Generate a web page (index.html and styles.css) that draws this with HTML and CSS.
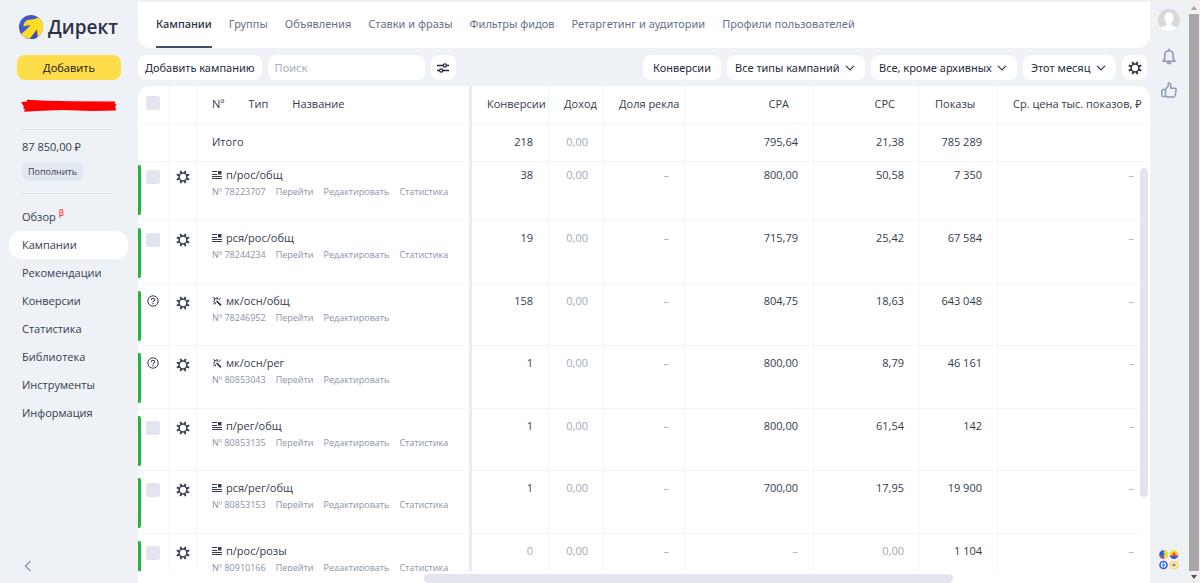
FILE: index.html
```html
<!DOCTYPE html>
<html lang="ru">
<head>
<meta charset="utf-8">
<title>Директ — Кампании</title>
<link rel="stylesheet" href="styles.css">
</head>
<body>
<svg class="defs" aria-hidden="true">
  <symbol id="gear" viewBox="0 0 14 14">
    <circle cx="7" cy="7" r="3.9" fill="none" stroke="currentColor" stroke-width="1.500"/>
    <g stroke="currentColor" stroke-width="1.800">
      <path d="M7 .3v2.500M7 11.200v2.500M.3 7h2.500M11.200 7h2.500" transform="rotate(22.500 7 7)"/>
      <path d="M7 .3v2.500M7 11.200v2.500M.3 7h2.500M11.200 7h2.500" transform="rotate(67.500 7 7)"/>
    </g>
  </symbol>
  <symbol id="textad" viewBox="0 0 10 10">
    <path d="M0 1.500h5M0 4.500h5M0 6.500h10M0 8.500h10" stroke="currentColor" stroke-width="1"/>
    <path d="M6 1h3.500v3.500H6z" fill="currentColor"/>
  </symbol>
  <symbol id="wand" viewBox="0 0 10 10">
    <path d="M4.600 5l4.400 4.400" stroke="#20242f" stroke-width="1.500"/>
    <path d="M1.200 1.600l2 1L5.600 1.600l-.6 2.200M1 5.600l1.800-1L2.400 2.600M1 8.400l2.400-2.400M3.600 8.400V6.800M6.800 4l1.800-2.400" fill="none" stroke="currentColor" stroke-width="1"/>
  </symbol>
  <symbol id="help" viewBox="0 0 12 12">
    <circle cx="6" cy="6" r="5.200" fill="none" stroke="currentColor"/>
    <path d="M4.300 4.900c0-2.300 3.500-2.200 3.500-.2 0 1.200-1.800 1.200-1.800 2.500M6 8v1.200" fill="none" stroke="currentColor" stroke-width="1.100"/>
  </symbol>
  <symbol id="chevron" viewBox="0 0 10 6">
    <path d="M1 .8l4 4 4-4" fill="none" stroke="currentColor" stroke-width="1.200"/>
  </symbol>
</svg>

<div class="app">
  <aside class="sidebar">
    <a class="logo" href="#">
      <svg class="logo-mark" viewBox="0 0 24 24" aria-hidden="true">
        <clipPath id="disc"><circle cx="12" cy="12" r="12"/></clipPath>
        <g clip-path="url(#disc)">
          <path d="M0 0h24v24H0z" fill="#3f57cf"/>
          <path d="M18.500 3l3-1L24 6v18h-5.500l-.5-9.500L10.500 24 1 20.500C4 17 8 14 11.500 10.500 9 9.800 6.500 11 4.500 12 4.500 8 6.500 5.200 10 4.800c3-.3 6-.6 8.500-1.800z" fill="#ffdc1f"/>
          <path d="M11 24l7-9.500.5 9.500z" fill="#3b4bb8"/>
        </g>
      </svg>
      <span>Директ</span>
    </a>
    <button class="add" type="button">Добавить</button>
    <svg class="redacted" viewBox="0 0 96 14" preserveAspectRatio="none" aria-hidden="true">
      <path d="M0 3l6-.5L6 .8l20 1 24 .4 44 .2.300 1.500-1 .5 2 1-1 2 .7 4-24 .5-30-1-25 1-13 .8 1-2.500-2-1 1-1.500z" fill="red"/>
    </svg>
    <div class="account">
      <div class="balance">87 850,00 ₽</div>
      <button class="topup" type="button">Пополнить</button>
    </div>
    <nav class="menu">
      <a href="#">Обзор <sup>β</sup></a>
      <a class="active" href="#">Кампании</a>
      <a href="#">Рекомендации</a>
      <a href="#">Конверсии</a>
      <a href="#">Статистика</a>
      <a href="#">Библиотека</a>
      <a href="#">Инструменты</a>
      <a href="#">Информация</a>
    </nav>
    <button class="collapse" type="button" aria-label="Свернуть меню">
      <svg viewBox="0 0 8 12"><path d="M6.500 1L1.500 6l5 5" fill="none" stroke="currentColor" stroke-width="1.500"/></svg>
    </button>
  </aside>

  <main class="main">
    <nav class="tabs">
      <a class="active" href="#">Кампании</a>
      <a href="#">Группы</a>
      <a href="#">Объявления</a>
      <a href="#">Ставки и фразы</a>
      <a href="#">Фильтры фидов</a>
      <a href="#">Ретаргетинг и аудитории</a>
      <a href="#">Профили пользователей</a>
    </nav>

    <div class="toolbar">
      <button class="pill create" type="button">Добавить кампанию</button>
      <input class="search" type="text" placeholder="Поиск" aria-label="Поиск">
      <button class="pill square" type="button" aria-label="Фильтры">
        <svg class="sliders" viewBox="0 0 12 12"><path d="M0 3.500h6M9.500 3.500H12M0 8.500h2.500M6 8.500h6" stroke="currentColor" stroke-width="1.300"/><circle cx="7.800" cy="3.500" r="1.600" fill="none" stroke="currentColor" stroke-width="1.300"/><circle cx="4.200" cy="8.500" r="1.600" fill="none" stroke="currentColor" stroke-width="1.300"/></svg>
      </button>
      <button class="pill push" type="button">Конверсии</button>
      <div class="picker">
        <select class="pill" aria-label="Тип кампаний"><option>Все типы кампаний</option></select>
        <svg class="chevron"><use href="#chevron"/></svg>
      </div>
      <div class="picker">
        <select class="pill" aria-label="Статус"><option>Все, кроме архивных</option></select>
        <svg class="chevron"><use href="#chevron"/></svg>
      </div>
      <div class="picker">
        <select class="pill" aria-label="Период"><option>Этот месяц</option></select>
        <svg class="chevron"><use href="#chevron"/></svg>
      </div>
      <button class="pill square" type="button" aria-label="Настройки таблицы"><svg class="gear"><use href="#gear"/></svg></button>
    </div>

    <section class="panel">
      <div class="viewport">
        <table class="grid">
          <colgroup>
            <col class="c-check"><col class="c-gear"><col class="c-name"><col class="c-conv"><col class="c-income"><col class="c-share"><col class="c-cpa"><col class="c-cpc"><col class="c-views"><col>
          </colgroup>
          <thead>
            <tr>
              <th><div class="flag"><input type="checkbox" aria-label="Выбрать все"></div></th>
              <th></th>
              <th class="name"><div class="heads"><span>Nº</span><span>Тип</span><span>Название</span></div></th>
              <th>Конверсии</th><th>Доход</th><th>Доля рекла</th><th class="end">CPA</th><th class="end">CPC</th><th class="end">Показы</th><th>Ср. цена тыс. показов, ₽</th>
            </tr>
            <tr class="total">
              <td></td><td></td><td class="name">Итого</td>
              <td>218</td><td class="dim">0,00</td><td></td><td>795,64</td><td>21,38</td><td>785 289</td><td></td>
            </tr>
          </thead>
          <tbody>
            <tr>
              <td><div class="flag"><i class="bar"></i><input type="checkbox" aria-label="п/рос/общ"></div></td>
              <td><button class="cog" type="button" aria-label="Действия"><svg class="gear"><use href="#gear"/></svg></button></td>
              <td class="name"><div class="title"><svg class="kind"><use href="#textad"/></svg>п/рос/общ</div><div class="links"><span>Nº 78223707</span><a href="#">Перейти</a><a href="#">Редактировать</a><a href="#">Статистика</a></div></td>
              <td>38</td><td class="dim">0,00</td><td class="dim">–</td><td>800,00</td><td>50,58</td><td>7 350</td><td class="dim">–</td>
            </tr>
            <tr>
              <td><div class="flag"><i class="bar"></i><input type="checkbox" aria-label="рся/рос/общ"></div></td>
              <td><button class="cog" type="button" aria-label="Действия"><svg class="gear"><use href="#gear"/></svg></button></td>
              <td class="name"><div class="title"><svg class="kind"><use href="#textad"/></svg>рся/рос/общ</div><div class="links"><span>Nº 78244234</span><a href="#">Перейти</a><a href="#">Редактировать</a><a href="#">Статистика</a></div></td>
              <td>19</td><td class="dim">0,00</td><td class="dim">–</td><td>715,79</td><td>25,42</td><td>67 584</td><td class="dim">–</td>
            </tr>
            <tr>
              <td><div class="flag"><i class="bar"></i><svg class="help"><use href="#help"/></svg></div></td>
              <td><button class="cog" type="button" aria-label="Действия"><svg class="gear"><use href="#gear"/></svg></button></td>
              <td class="name"><div class="title"><svg class="kind"><use href="#wand"/></svg>мк/осн/общ</div><div class="links"><span>Nº 78246952</span><a href="#">Перейти</a><a href="#">Редактировать</a></div></td>
              <td>158</td><td class="dim">0,00</td><td class="dim">–</td><td>804,75</td><td>18,63</td><td>643 048</td><td class="dim">–</td>
            </tr>
            <tr>
              <td><div class="flag"><i class="bar"></i><svg class="help"><use href="#help"/></svg></div></td>
              <td><button class="cog" type="button" aria-label="Действия"><svg class="gear"><use href="#gear"/></svg></button></td>
              <td class="name"><div class="title"><svg class="kind"><use href="#wand"/></svg>мк/осн/рег</div><div class="links"><span>Nº 80853043</span><a href="#">Перейти</a><a href="#">Редактировать</a></div></td>
              <td>1</td><td class="dim">0,00</td><td class="dim">–</td><td>800,00</td><td>8,79</td><td>46 161</td><td class="dim">–</td>
            </tr>
            <tr>
              <td><div class="flag"><i class="bar"></i><input type="checkbox" aria-label="п/рег/общ"></div></td>
              <td><button class="cog" type="button" aria-label="Действия"><svg class="gear"><use href="#gear"/></svg></button></td>
              <td class="name"><div class="title"><svg class="kind"><use href="#textad"/></svg>п/рег/общ</div><div class="links"><span>Nº 80853135</span><a href="#">Перейти</a><a href="#">Редактировать</a><a href="#">Статистика</a></div></td>
              <td>1</td><td class="dim">0,00</td><td class="dim">–</td><td>800,00</td><td>61,54</td><td>142</td><td class="dim">–</td>
            </tr>
            <tr>
              <td><div class="flag"><i class="bar"></i><input type="checkbox" aria-label="рся/рег/общ"></div></td>
              <td><button class="cog" type="button" aria-label="Действия"><svg class="gear"><use href="#gear"/></svg></button></td>
              <td class="name"><div class="title"><svg class="kind"><use href="#textad"/></svg>рся/рег/общ</div><div class="links"><span>Nº 80853153</span><a href="#">Перейти</a><a href="#">Редактировать</a><a href="#">Статистика</a></div></td>
              <td>1</td><td class="dim">0,00</td><td class="dim">–</td><td>700,00</td><td>17,95</td><td>19 900</td><td class="dim">–</td>
            </tr>
            <tr>
              <td><div class="flag"><i class="bar"></i><input type="checkbox" aria-label="п/рос/розы"></div></td>
              <td><button class="cog" type="button" aria-label="Действия"><svg class="gear"><use href="#gear"/></svg></button></td>
              <td class="name"><div class="title"><svg class="kind"><use href="#textad"/></svg>п/рос/розы</div><div class="links"><span>Nº 80910166</span><a href="#">Перейти</a><a href="#">Редактировать</a><a href="#">Статистика</a></div></td>
              <td class="dim">0</td><td class="dim">0,00</td><td class="dim">–</td><td class="dim">–</td><td class="dim">0,00</td><td>1 104</td><td class="dim">–</td>
            </tr>
          </tbody>
        </table>
      </div>
      <div class="vtrack"><div class="vthumb"></div></div>
      <div class="htrack"><div class="hthumb"></div></div>
    </section>
  </main>

  <aside class="rail">
    <svg class="avatar" viewBox="0 0 22 22" aria-label="Профиль">
      <clipPath id="face"><circle cx="11" cy="11" r="11"/></clipPath>
      <g clip-path="url(#face)"><path d="M0 0h22v22H0z" fill="#d9d9d9"/><path d="M11 3.500c-3 0-4.500 2-4.500 5 0 3 1 4.500 2 5.500v2.500c-2 .8-5 1.200-6 3V22h17v-2.500c-1-1.800-4-2.200-6-3V14c1-1 2-2.500 2-5.500 0-3-1.500-5-4.500-5z" fill="#fff"/></g>
    </svg>
    <svg class="bell" viewBox="0 0 14 17" aria-label="Уведомления"><path d="M1 13.200l1.800-2.500V7c0-2.500 1.700-4.200 4.200-4.200S11.200 4.500 11.200 7v3.700l1.800 2.500zM7 .5v2.300" fill="none" stroke="currentColor" stroke-width="1.600" stroke-linejoin="round"/><path d="M4.500 14.200h5c0 3-5 3-5 0z" fill="currentColor"/></svg>
    <svg class="thumb" viewBox="0 0 16 16" aria-label="Отзыв"><path d="M4.500 7.500L7.200 4V1.800C7.200.6 9.800.6 9.800 3v3.300h3.700c1.500 0 1.800 1 1.600 2l-1 5c-.2 1-.8 1.700-2 1.700H6.500c-1.300 0-2-.7-2-2zM4.500 7.500H2c-.7 0-1.200.5-1.200 1.200v4.600c0 .8.500 1.300 1.200 1.300h2.800" fill="none" stroke="currentColor" stroke-width="1.500" stroke-linejoin="round"/></svg>
    <svg class="services" viewBox="0 0 20 20" aria-label="Сервисы">
      <circle cx="4.500" cy="4.500" r="4.300" fill="#3558dc"/><path d="M5 .2a4.300 4.300 0 0 1 0 8.600z" fill="#ffd91a"/><path d="M.8 6.500L3 4.800l1 3.800C2.500 8.600 1.400 7.800.8 6.500z" fill="#f04438"/><path d="M4 1l2 3-2 4z" fill="#19a6e8"/>
      <circle cx="15" cy="4.500" r="4.300" fill="#ffd91a"/><path d="M10.800 5.500h8.400A4.300 4.300 0 0 1 10.800 5.500z" fill="#4b4be0"/><path d="M15 1.800l2.200 3.800h-4.400z" fill="#ee3b32"/>
      <circle cx="4.500" cy="15" r="3.500" fill="#fff" stroke="#4453df" stroke-width="1.600"/><path d="M4.500 12.800l2 2.700H5.300v2H3.700v-2H2.500z" fill="#13a5ed"/>
      <rect x="11.700" y="11.700" width="6.800" height="6.800" rx="2" fill="#fff8df" stroke="#ffd45c" stroke-width="1.500"/><path d="M13.500 14.300h3M13.500 15.800h3" stroke="#4c4c58" stroke-width=".9"/>
    </svg>
  </aside>

  <div class="scrollbar">
    <svg class="arrow" viewBox="0 0 6 4"><path d="M0 4l3-4 3 4z" fill="#a3a3a3"/></svg>
    <div class="slider"></div>
    <svg class="arrow" viewBox="0 0 6 4"><path d="M0 0l3 4 3-4z" fill="#505050"/></svg>
  </div>
</div>
</body>
</html>
```
FILE: styles.css
```css
* { box-sizing: border-box; }

body {
  margin: 0;
  background: #eef2f7;
  color: #343b4e;
  font: 11px/16px "Open Sans", "Noto Sans", sans-serif;
}

a { color: inherit; text-decoration: none; }
button, input, select { font: inherit; color: inherit; border: 0; margin: 0; }
button { padding: 0; background: none; }
svg { display: block; flex: none; }
.defs { position: absolute; width: 0; height: 0; }

.app {
  display: flex;
  height: 100vh;
  border-top: 2px solid #f0f0f0;
  overflow: hidden;
}

/* Sidebar */
.sidebar {
  display: flex;
  flex-direction: column;
  flex: none;
  width: 138px;
  padding: 10px 10px 11px 9px;
}

.logo {
  display: flex;
  align-items: center;
  gap: 5px;
  height: 30px;
  padding-left: 10px;
  font-size: 19px;
  line-height: 30px;
  font-weight: 600;
  color: #2b3245;
}
.logo-mark { width: 24px; height: 24px; }

.add {
  height: 25px;
  margin: 13px 7px 0 8px;
  border-radius: 8px;
  background: #ffdc4a;
  color: #111;
}

.redacted { width: 96px; height: 14px; margin: 19px 0 0 12px; }

.account {
  margin: 16px 15px 0 13px;
  padding: 9px 0 12px;
  border: solid #e1e5ec;
  border-width: 1px 0;
}
.balance { white-space: nowrap; }
.topup {
  height: 19px;
  margin-top: 7px;
  padding: 0 6px;
  border-radius: 6px;
  background: #e1e8f1;
  font-size: 9px;
}

.menu { display: flex; flex-direction: column; margin-top: 9px; }
.menu a {
  padding: 6px 13px;
  border-radius: 12px;
}
.menu .active { background: #fff; }
.menu sup {
  color: #f33;
  font-size: 8px;
  line-height: 0;
  font-weight: 600;
}

.collapse {
  width: 8px;
  height: 12px;
  margin: auto 0 0 15px;
  color: #8d9ab8;
}

/* Main column */
.main {
  display: flex;
  flex-direction: column;
  flex: 1;
  min-width: 0;
}

.tabs, .toolbar { font-family: "Noto Sans", "Open Sans", sans-serif; }

.tabs {
  display: flex;
  gap: 17px;
  height: 46px;
  padding: 0 18px;
  border-radius: 0 0 12px 12px;
  background: #fff;
  color: #66708a;
  white-space: nowrap;
}
.tabs a { padding-top: 14px; }
.tabs .active {
  border-bottom: 2px solid #474d62;
  color: #2b3245;
  font-weight: 500;
}

.toolbar {
  display: flex;
  gap: 6px;
  padding: 7px 3px 6px 0;
  white-space: nowrap;
}
.pill {
  height: 25px;
  padding: 0 10px;
  border-radius: 8px;
  background: #fff;
  appearance: none;
  color: #252b3b;
}
.create { padding: 0 7px; }
.square {
  display: grid;
  place-items: center;
  width: 25px;
  padding: 0;
}
.push { margin-left: auto; }
.search {
  width: 157px;
  height: 25px;
  padding: 0 7px;
  border-radius: 8px;
  background: #fff;
}
.search::placeholder { color: #a6aec0; opacity: 1; }
.sliders { width: 12px; height: 12px; }
.picker { position: relative; }
.picker .pill { padding: 0 25px 0 8px; }
.chevron {
  position: absolute;
  top: 10px;
  right: 10px;
  width: 10px;
  height: 6px;
  pointer-events: none;
}

.gear { width: 14px; height: 14px; }

/* Campaign table */
.panel {
  position: relative;
  display: flex;
  flex-direction: column;
  flex: 1;
  min-height: 0;
  border-radius: 12px 12px 0 0;
  background: #fff;
  overflow: hidden;
}
.viewport { flex: 1; min-height: 0; overflow: hidden; }

.grid {
  width: 100%;
  table-layout: fixed;
  border-collapse: separate;
  border-spacing: 0;
}
.c-check { width: 31px; }
.c-gear { width: 28px; }
.c-name { width: 275px; }
.c-conv { width: 77px; }
.c-income { width: 55px; }
.c-share { width: 81px; }
.c-cpa { width: 129px; }
.c-cpc { width: 106px; }
.c-views { width: 78px; }

.grid th, .grid td {
  height: 63px;
  padding: 9px 15px 0;
  border: solid #f4f5f9;
  border-width: 0 1px 1px 0;
  text-align: right;
  vertical-align: top;
  font-weight: 400;
  white-space: nowrap;
}
.grid th {
  height: 38px;
  padding: 0 0 1px 15px;
  text-align: left;
  vertical-align: middle;
}
.grid th.end { padding-right: 24px; text-align: right; }
.grid .total td {
  height: 38px;
  padding-top: 0;
  padding-bottom: 1px;
  vertical-align: middle;
}
.grid th:last-child, .grid td:last-child { border-right: 0; }
.grid td:first-child, .grid td:nth-child(2) { padding: 7px 0 0; }
.grid th:first-child { padding: 0; }
.grid td.name { text-align: left; }
.grid .name { border-right: 3px solid #ebecf1; }
.grid tbody tr:nth-child(odd) td { height: 62px; }
.grid tbody tr:first-child td { height: 59px; padding-top: 5px; }
.grid tbody tr:first-child td:nth-child(-n+2) { padding-top: 3px; }
.grid .dim { color: #a2aabd; }
.grid td:last-child { padding-right: 16px; }

.heads { display: flex; gap: 24px; }
.flag { display: flex; gap: 5px; }
th .flag { padding: 0 0 3px 8px; }
.bar {
  width: 3px;
  height: 50px;
  border-radius: 0 2px 2px 0;
  background: #24b33b;
}
.flag input {
  width: 14px;
  height: 14px;
  border-radius: 3px;
  background: #e2e5ee;
  appearance: none;
}
td .flag input { margin-top: 5px; }
.help { width: 12px; height: 12px; margin: 4px 1px; color: #343b4e; }
.cog { display: block; margin: 5px 0 0 7px; }

.title { display: flex; align-items: center; gap: 4px; }
.kind { width: 10px; height: 10px; }
.links {
  display: flex;
  gap: 10px;
  margin-top: 1px;
  color: #8a93a8;
  font-size: 9px;
}

/* Scroll indicators laid over the table's edge */
.vtrack {
  position: absolute;
  top: 77px;
  right: 0;
  bottom: 0;
  width: 12px;
  padding: 5px 2px 86px 2px;
  background: #fff;
}
.vthumb {
  height: 100%;
  border-radius: 4px;
  background: #e2e5ee;
}
.htrack { flex: none; height: 12px; padding: 3px 197px 0 286px; }
.hthumb {
  height: 9px;
  border-radius: 5px;
  background: #e2e5ee;
}

/* Right rail */
.rail {
  display: flex;
  flex-direction: column;
  align-items: center;
  flex: none;
  width: 38px;
  padding: 7px 0 13px;
  color: #8d9ab8;
}
.avatar { width: 22px; height: 22px; }
.bell { width: 14px; height: 17px; margin-top: 17px; }
.thumb { width: 16px; height: 16px; margin-top: 17px; }
.services { width: 20px; height: 20px; margin-top: auto; }

.scrollbar {
  display: flex;
  flex-direction: column;
  align-items: center;
  gap: 4px;
  flex: none;
  width: 12px;
  padding: 4px 0;
  background: #f1f1f1;
}
.arrow { width: 6px; height: 4px; }
.slider { flex: 1; width: 10px; background: #a8a8a8; }
```
